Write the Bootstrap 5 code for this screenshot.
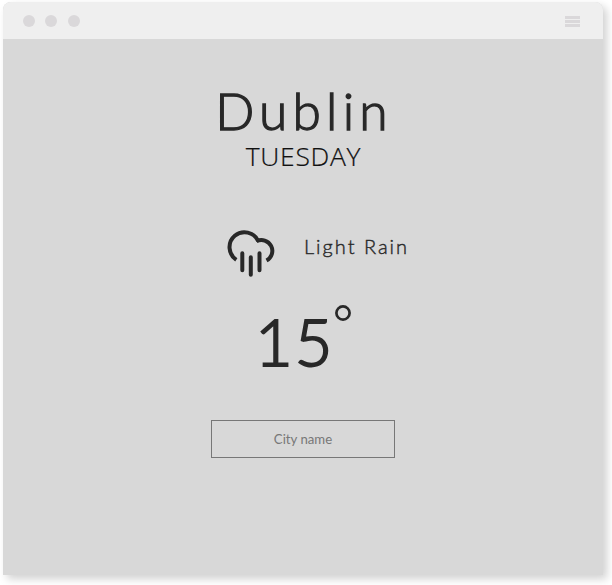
<!DOCTYPE html>
<html lang="en">
<head>
<meta charset="utf-8">
<meta name="viewport" content="width=device-width, initial-scale=1">
<title>Weather</title>
<link href="https://cdn.jsdelivr.net/npm/bootstrap@5.3.0/dist/css/bootstrap.min.css" rel="stylesheet">
<style>
body{background:#fff;font-family:Lato,"Open Sans",sans-serif;color:#282828;padding:2px 9px 10px 3px;height:585px;overflow:hidden}
.window{width:600px;height:573px;background:#d8d8d8;border-radius:8px 8px 0 0;box-shadow:4px 4px 8px rgba(0,0,0,.18)}
.titlebar{height:37px;background:#efefef;padding:0 23px 0 20px;border-radius:8px 8px 0 0}
.dots{gap:10.3px}
.dot{width:12px;height:12px;background:#dad8da}
.bars{width:15px;gap:1px;padding-top:2px}
.bars span{height:3px;background:#dad8da}
.city{font-size:51.5px;line-height:60px;letter-spacing:5.2px;margin:41px 0 0 2px;font-weight:300;-webkit-text-stroke:1.3px #282828}
.day{font-family:"Open Sans",sans-serif;font-size:26.5px;line-height:32px;letter-spacing:.7px;padding-left:1px;font-weight:300;color:#111;-webkit-text-stroke:.2px #111}
.sky{margin-top:57px;height:50px;padding-left:223px}
.cond{font-size:20px;line-height:24px;letter-spacing:2px;margin:5px 0 0 28px;font-weight:300;-webkit-text-stroke:.4px #282828}
.temp{height:76px;margin-top:25px;padding-left:252px}
.deg{font-size:65px;line-height:76px;letter-spacing:2px;font-weight:300;-webkit-text-stroke:2px #282828;margin-top:-1px}
.ring{margin-left:0}
.search{width:184px;height:38px;margin-top:40px;margin-left:208px;border:1px solid #777;border-radius:0;background:transparent;font-size:13.2px;padding:0}
.search::placeholder{color:#777;opacity:1}
</style>
</head>
<body>
<main class="window">
  <header class="titlebar d-flex align-items-center justify-content-between">
    <div class="dots d-flex"><span class="dot rounded-circle"></span><span class="dot rounded-circle"></span><span class="dot rounded-circle"></span></div>
    <div class="bars d-flex flex-column"><span></span><span></span><span></span></div>
  </header>
  <section class="d-flex flex-column">
    <h1 class="city text-center mb-0">Dublin</h1>
    <div class="day text-center">TUESDAY</div>
    <div class="sky d-flex align-items-start">
      <svg width="50" height="50" viewBox="226 229 50 50" fill="none" stroke="#282828" stroke-width="4">
        <path d="M236.3 259.8A15 15 0 1 1 258.2 241.1"/>
        <path d="M256.5 241.3A10.8 10.8 0 0 1 266.5 260.5"/>
        <path stroke-linecap="round" d="M242.3 253.3V270.3M250.8 257.3V274.8M259.5 253.3V270.3"/>
      </svg>
      <div class="cond">Light Rain</div>
    </div>
    <div class="temp d-flex align-items-start">
      <span class="deg">15</span>
      <svg class="ring" width="18" height="18" viewBox="0 0 18 18"><circle cx="9" cy="9" r="6.6" fill="none" stroke="#282828" stroke-width="2.7"/></svg>
    </div>
    <input class="search form-control text-center" type="text" placeholder="City name" aria-label="City name">
  </section>
</main>
<script src="https://cdn.jsdelivr.net/npm/bootstrap@5.3.0/dist/js/bootstrap.bundle.min.js"></script>
</body>
</html>
